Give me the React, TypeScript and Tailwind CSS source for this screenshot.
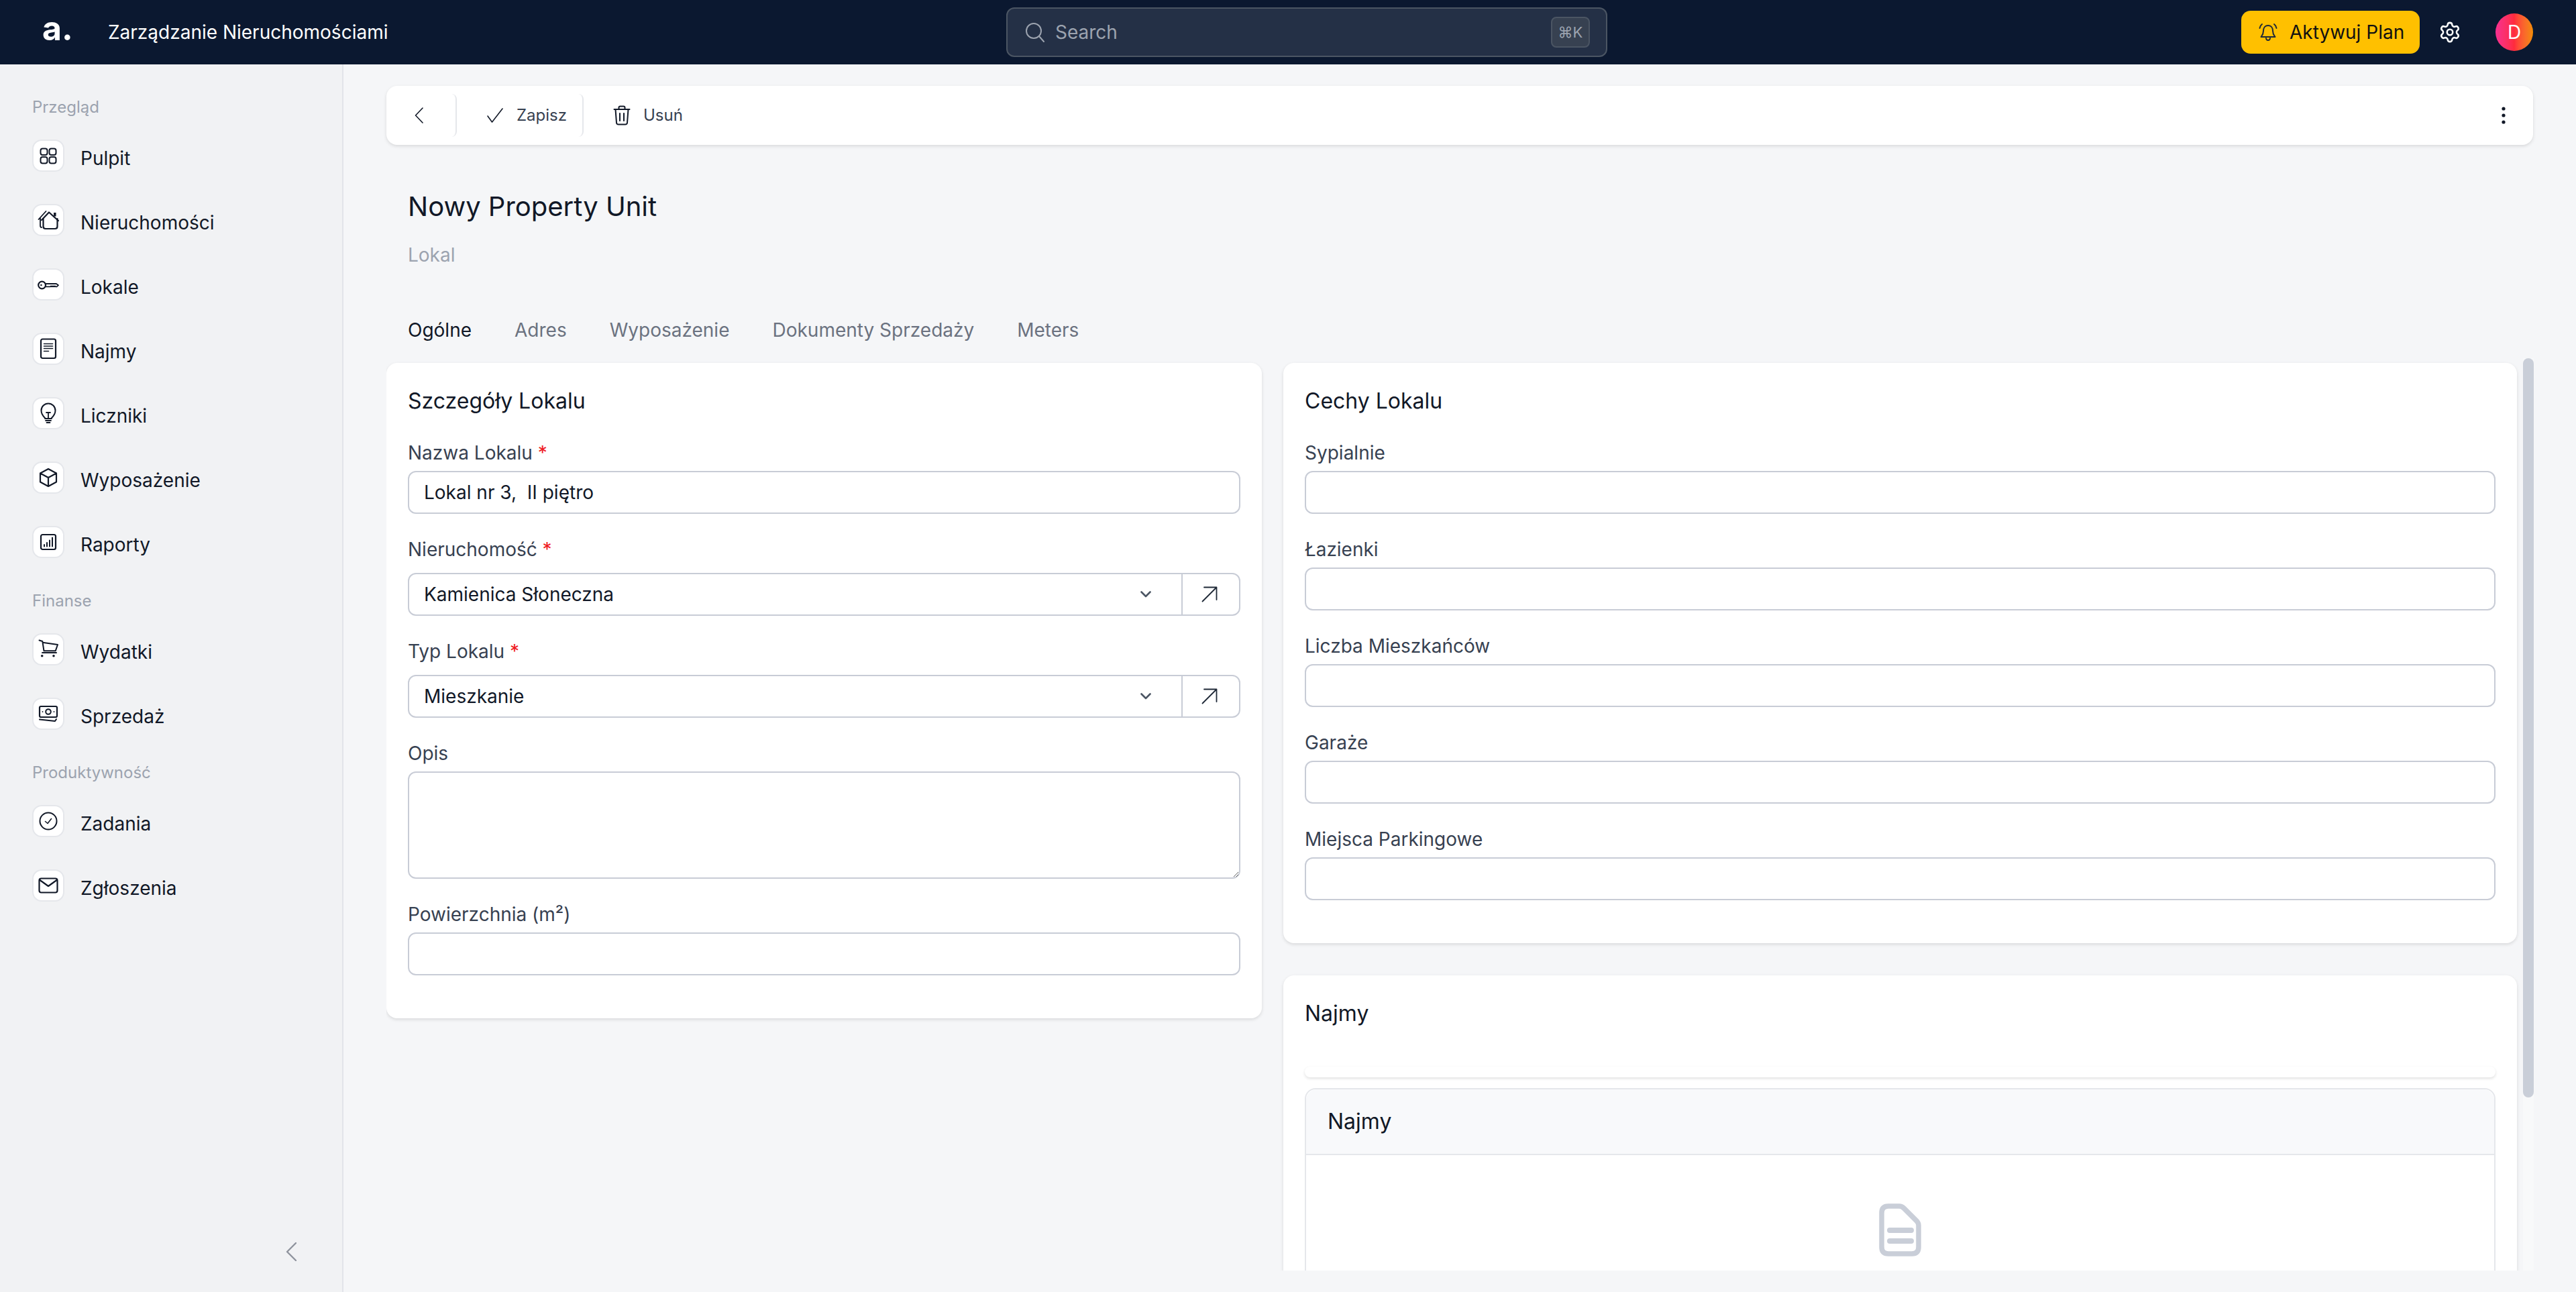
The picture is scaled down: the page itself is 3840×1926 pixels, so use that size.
import type { ReactNode } from "react";

function SvgIcon({ children }: { children: ReactNode }) {
  return (
    <svg width="32" height="32" viewBox="0 0 32 32" fill="none" stroke="#111827" strokeWidth="2" strokeLinecap="round" strokeLinejoin="round">
      {children}
    </svg>
  );
}

const navIcons: Record<string, ReactNode> = {
  Pulpit: (
    <>
      <rect x="4.5" y="5.5" width="10" height="9.5" rx="3" />
      <rect x="17.5" y="5.5" width="10" height="9.5" rx="3" />
      <rect x="4.5" y="18" width="10" height="9.5" rx="3" />
      <rect x="17.5" y="18" width="10" height="9.5" rx="3" />
    </>
  ),
  Nieruchomości: (
    <>
      <path d="M6 16 L17 4.5 L31 17" strokeWidth="2.2" />
      <path d="M8.5 14 V25.5 Q8.5 29 12 29 H26 Q29.5 29 29.5 25.5 V14" strokeWidth="2.2" />
      <path d="M12.5 3 L1.5 15 M4 13 V24 Q4 27 6 27" strokeWidth="1.8" />
      <path d="M25.8 5 V10.5" strokeWidth="3.5" strokeLinecap="butt" />
    </>
  ),
  Lokale: (
    <>
      <circle cx="6.6" cy="17" r="5.4" strokeWidth="2.2" />
      <circle cx="5.4" cy="17" r="1.3" fill="#111827" stroke="none" />
      <path d="M12 15 H28 L31 17.2 L28.6 19.4 H27 L26 18.4 L25 19.4 L24 18.4 L23 19.4 L22 18.4 L21 19.4 L20 18.4 L19 19.4 H12" strokeWidth="1.8" />
    </>
  ),
  Najmy: (
    <>
      <rect x="5" y="1.5" width="22" height="28.5" rx="2.5" strokeWidth="2.2" />
      <path d="M9.5 8.5 H22.5 M9.5 12 H22.5 M9.5 15.5 H22.5 M9.5 19.5 H16.5" strokeWidth="1.6" />
    </>
  ),
  Liczniki: (
    <>
      <path d="M11 23 C8 20 5.5 17 5.5 12 a10.5 10.5 0 0 1 21 0 C26.5 17 24 20 21 23" />
      <path d="M16 15 V24 M13 15 H19" strokeWidth="1.8" />
      <path d="M11 24 H21 M12 27 H20 M13.5 30 H18.5" strokeWidth="1.8" />
    </>
  ),
  Wyposażenie: <path d="M16 3 L28 9.5 V22.5 L16 29 L4 22.5 V9.5 Z M4 9.5 L16 16 L28 9.5 M16 16 V29" strokeWidth="2.2" />,
  Raporty: (
    <>
      <rect x="5" y="5" width="22" height="22" rx="2.5" strokeWidth="2.2" />
      <path d="M10 22.5 V20 M14 22.5 V17 M18 22.5 V13.5 M22 22.5 V9.5" strokeWidth="2" />
    </>
  ),
  Wydatki: (
    <>
      <path d="M2.5 2.5 L7.3 4 L9.5 18.3 H26.7 L30 9 L7.5 5.8" strokeWidth="2" />
      <path d="M7 21 H28" strokeWidth="2" />
      <circle cx="6.7" cy="25.7" r="1.8" fill="#111827" stroke="none" />
      <circle cx="24" cy="25.7" r="1.8" fill="#111827" stroke="none" />
    </>
  ),
  Sprzedaż: (
    <>
      <rect x="3" y="5" width="26" height="16" rx="2" strokeWidth="2.2" />
      <circle cx="16" cy="13" r="3.8" strokeWidth="2" />
      <circle cx="7.5" cy="13" r="0.9" fill="#111827" stroke="none" />
      <circle cx="24.5" cy="13" r="0.9" fill="#111827" stroke="none" />
      <path d="M3 24.5 L26 27 L28 24" strokeWidth="2" />
    </>
  ),
  Zadania: (
    <>
      <circle cx="16" cy="16" r="12.5" />
      <path d="M11.5 16.5 L15 19.5 L20.5 12.5" strokeWidth="1.6" />
    </>
  ),
  Zgłoszenia: (
    <>
      <rect x="2.5" y="5.5" width="27" height="21" rx="3" strokeWidth="2.2" />
      <path d="M3.5 8 L16 17 L28.5 8" strokeWidth="2.2" />
    </>
  ),
};

const navSections = [
  { label: "Przegląd", items: ["Pulpit", "Nieruchomości", "Lokale", "Najmy", "Liczniki", "Wyposażenie", "Raporty"] },
  { label: "Finanse", items: ["Wydatki", "Sprzedaż"] },
  { label: "Produktywność", items: ["Zadania", "Zgłoszenia"] },
];

function Header() {
  return (
    <header className="h-24 shrink-0 bg-[#0b1830] flex items-center">
      <div className="w-[1500px] flex items-center text-white">
        <span className="ml-[63px] w-[98px] text-[50px] leading-none font-bold pb-3">a.</span>
        <span className="text-[28px]">Zarządzanie Nieruchomościami</span>
      </div>
      <div className="w-[896px] h-[74px] flex items-center rounded-xl border-2 border-[#4b5563] bg-[#243046] pl-[26px] pr-[24px]">
        <svg width="30" height="30" viewBox="0 0 30 30" fill="none" stroke="#9ca3af" strokeWidth="2" strokeLinecap="round">
          <circle cx="13" cy="13" r="11" />
          <path d="M21 21 L28 29" />
        </svg>
        <span className="ml-[15px] text-[28px] text-[#9ca3af]">Search</span>
        <span className="ml-auto w-[58px] h-[46px] flex items-center justify-center rounded-lg border-2 border-[#4b5563] bg-[#374151] text-[22px] text-[#9ca3af]">⌘K</span>
      </div>
      <div className="flex-1 flex items-center justify-end pr-16">
        <button className="w-[266px] h-16 flex items-center rounded-[14px] bg-[#ffc000] pl-[26px] text-[28px] text-[#111]">
          <svg width="28" height="28" viewBox="0 0 28 28" fill="none" stroke="#1f2937" strokeWidth="2" strokeLinecap="round" strokeLinejoin="round">
            <path d="M14 4 C9 4 7 8 7 12 C7 17 5 19 3.5 21 H24.5 C23 19 21 17 21 12 C21 8 19 4 14 4 Z" />
            <path d="M11 23 C11.5 27 16.5 27 17 23" />
            <path d="M1.5 8 C2 5.5 3 3.5 5 2 M26.5 8 C26 5.5 25 3.5 23 2" />
          </svg>
          <span className="ml-[18px]">Aktywuj Plan</span>
        </button>
        <svg className="ml-[28px]" width="34" height="34" viewBox="0 0 24 24" fill="none" stroke="#fff" strokeWidth="1.8" strokeLinecap="round" strokeLinejoin="round">
          <path d="M9.671 4.136a2.34 2.34 0 0 1 4.659 0 2.34 2.34 0 0 0 3.319 1.915 2.34 2.34 0 0 1 2.33 4.033 2.34 2.34 0 0 0 0 3.831 2.34 2.34 0 0 1-2.33 4.033 2.34 2.34 0 0 0-3.319 1.915 2.34 2.34 0 0 1-4.659 0 2.34 2.34 0 0 0-3.32-1.915 2.34 2.34 0 0 1-2.33-4.033 2.34 2.34 0 0 0 0-3.831A2.34 2.34 0 0 1 6.35 6.051a2.34 2.34 0 0 0 3.319-1.915" />
          <circle cx="12" cy="12" r="3" />
        </svg>
        <div className="ml-[51px] w-14 h-14 rounded-full flex items-center justify-center bg-gradient-to-r from-[#f72f91] via-[#ff2b3c] to-[#f28c00] text-white text-[28px]">D</div>
      </div>
    </header>
  );
}

function Sidebar() {
  return (
    <aside className="w-[512px] shrink-0 flex flex-col border-r-2 border-[#e2e4e9] bg-[#f1f2f4] pl-12 pt-12">
      {navSections.map((section) => (
        <div key={section.label} className="mb-12">
          <div className="h-8 mb-8 text-[24px] leading-8 text-[#9ca3af]">{section.label}</div>
          <div className="flex flex-col gap-12">
            {section.items.map((item) => (
              <div key={item} className="h-12 flex items-center gap-6">
                <span className="w-12 h-12 flex items-center justify-center rounded-[14px] border-2 border-[#e5e7eb] bg-white">
                  <SvgIcon>{navIcons[item]}</SvgIcon>
                </span>
                <span className="pt-2 text-[28px] text-[#111827]">{item}</span>
              </div>
            ))}
          </div>
        </div>
      ))}
      <svg className="mt-auto self-end mr-[68px] mb-[46px]" width="16" height="28" viewBox="0 0 16 28" fill="none" stroke="#8f939d" strokeWidth="2.4" strokeLinecap="round" strokeLinejoin="round">
        <path d="M15 1 L2 14 L15 27" />
      </svg>
    </aside>
  );
}

function Toolbar() {
  return (
    <div className="h-[88px] w-[3200px] flex items-center rounded-2xl bg-white shadow-[0_2px_5px_rgba(0,0,0,0.12)] text-[24px] text-[#374151]">
      <div className="w-[105px] h-16 flex items-center pl-[42px] border-r-2 border-[#e5e7eb] rounded-r-lg">
        <svg width="13" height="24" viewBox="0 0 13 24" fill="none" stroke="#111827" strokeWidth="1.6" strokeLinecap="round" strokeLinejoin="round">
          <path d="M12 1 L1.5 12 L12 23" />
        </svg>
      </div>
      <div className="w-[189px] h-16 flex items-center pl-[44px] border-r-2 border-[#e5e7eb] rounded-r-lg">
        <svg width="26" height="24" viewBox="0 0 26 24" fill="none" stroke="#111827" strokeWidth="1.6" strokeLinecap="round" strokeLinejoin="round">
          <path d="M2 13 L8.5 22 L24 2" />
        </svg>
        <span className="ml-[19px]">Zapisz</span>
      </div>
      <div className="h-16 flex items-center pl-[44px]">
        <svg width="26" height="30" viewBox="0 0 26 30" fill="none" stroke="#111827" strokeWidth="2" strokeLinecap="round" strokeLinejoin="round">
          <path d="M1.5 6 H24.5 M8.5 6 V3.5 Q8.5 1.5 10.5 1.5 H15.5 Q17.5 1.5 17.5 3.5 V6" />
          <path d="M3.5 6 L5 26 Q5.2 28.5 8 28.5 H18 Q20.8 28.5 21 26 L22.5 6" />
          <path d="M10 12 V23 M16 12 V23" />
        </svg>
        <span className="ml-[19px]">Usuń</span>
      </div>
      <svg className="ml-auto mr-[41px]" width="6" height="26" viewBox="0 0 6 26" fill="#111827">
        <circle cx="3" cy="3" r="2.6" />
        <circle cx="3" cy="13" r="2.6" />
        <circle cx="3" cy="23" r="2.6" />
      </svg>
    </div>
  );
}

function Label({ text, required }: { text: string; required?: boolean }) {
  return (
    <label className="block h-10 mb-2 text-[28px] leading-[42px] text-[#374151]">
      {text}
      {required && <span className="text-[#ef1c24]"> *</span>}
    </label>
  );
}

function TextField({ label, required, value }: { label: string; required?: boolean; value?: string }) {
  return (
    <div className="mb-8">
      <Label text={label} required={required} />
      <input
        readOnly
        defaultValue={value}
        className="block w-full h-16 rounded-xl border-2 border-[#c8ccd6] bg-white px-[22px] text-[28px] text-[#111827] outline-none"
      />
    </div>
  );
}

function LinkSelect({ label, value }: { label: string; value: string }) {
  return (
    <div className="mb-8">
      <div className="mb-4">
        <Label text={label} required />
      </div>
      <div className="h-16 flex rounded-xl border-2 border-[#c8ccd6] bg-white text-[28px] text-[#111827]">
        <div className="flex-1 flex items-center pl-[22px] pr-[45px] border-r-2 border-[#c8ccd6]">
          <span>{value}</span>
          <svg className="ml-auto" width="16" height="10" viewBox="0 0 16 10" fill="none" stroke="#4b5563" strokeWidth="2.6" strokeLinecap="round" strokeLinejoin="round">
            <path d="M1.5 1.5 L8 8 L14.5 1.5" />
          </svg>
        </div>
        <div className="w-[84px] flex items-center justify-center pr-1">
          <svg width="24" height="24" viewBox="0 0 24 24" fill="none" stroke="#1f2937" strokeWidth="1.8" strokeLinecap="round" strokeLinejoin="round">
            <path d="M1.5 22.5 L22.5 1.5 M4 1.5 H22.5 V20" />
          </svg>
        </div>
      </div>
    </div>
  );
}

function Card({ title, children }: { title: string; children: ReactNode }) {
  return (
    <section className="rounded-2xl bg-white px-8 pt-[33px] pb-8 shadow-[0_2px_5px_rgba(0,0,0,0.12)]">
      <h2 className="h-12 mb-8 text-[32px] leading-[48px] font-normal text-[#111827]">{title}</h2>
      {children}
    </section>
  );
}

function LeftColumn() {
  return (
    <Card title="Szczegóły Lokalu">
      <TextField label="Nazwa Lokalu" required value="Lokal nr 3,  II piętro" />
      <LinkSelect label="Nieruchomość" value="Kamienica Słoneczna" />
      <LinkSelect label="Typ Lokalu" value="Mieszkanie" />
      <div className="mb-8">
        <Label text="Opis" />
        <textarea readOnly className="block w-full h-40 rounded-xl border-2 border-[#c8ccd6] bg-white outline-none" />
      </div>
      <TextField label="Powierzchnia (m²)" />
    </Card>
  );
}

function RightColumn() {
  return (
    <div className="flex flex-col gap-12">
      <Card title="Cechy Lokalu">
        <TextField label="Sypialnie" />
        <TextField label="Łazienki" />
        <TextField label="Liczba Mieszkańców" />
        <TextField label="Garaże" />
        <TextField label="Miejsca Parkingowe" />
      </Card>
      <section className="rounded-2xl bg-white px-8 pt-[33px] pb-8 shadow-[0_2px_5px_rgba(0,0,0,0.12)]">
        <h2 className="h-12 text-[32px] leading-[48px] font-normal text-[#111827]">Najmy</h2>
        <div className="h-4 mt-[55px] rounded-lg bg-white shadow-[0_2px_4px_rgba(0,0,0,0.12)]" />
        <div className="mt-4 rounded-t-2xl border-2 border-[#e5e7eb]">
          <div className="h-[98px] flex items-center px-8 rounded-t-2xl border-b-2 border-[#e5e7eb] bg-[#f8f9fb] text-[32px] text-[#111827]">Najmy</div>
          <div className="flex justify-center pt-[68px] pb-16">
            <svg width="80" height="88" viewBox="0 0 80 88" fill="none" stroke="#c9ced8" strokeWidth="7.5" strokeLinecap="round" strokeLinejoin="round">
              <path d="M22 8 H38 Q42 8 45 11 L64 30 Q67 33 67 37 V69 Q67 79 57 79 H22 Q12 79 12 69 V18 Q12 8 22 8 Z" />
              <path d="M24 44 H56 M24 60 H56" strokeWidth="8" />
            </svg>
          </div>
        </div>
      </section>
    </div>
  );
}

function Main() {
  return (
    <main className="flex-1 min-w-0 flex flex-col bg-[#f5f6f8] pl-16 pt-8">
      <Toolbar />
      <h1 className="ml-8 mt-[64px] h-14 text-[40px] leading-[56px] font-normal text-[#111827]">Nowy Property Unit</h1>
      <div className="ml-8 mt-[24px] h-10 text-[28px] leading-10 text-[#9ca3af]">Lokal</div>
      <div className="ml-8 mt-[72px] h-10 flex gap-[64px] text-[28px] leading-10 text-[#6b7280]">
        <span className="text-[#111827]">Ogólne</span>
        <span>Adres</span>
        <span>Wyposażenie</span>
        <span>Dokumenty Sprzedaży</span>
        <span>Meters</span>
      </div>
      <div className="relative mt-[22px] w-[3201px] h-[1360px] overflow-hidden pt-[7px]">
        <div className="grid grid-cols-[1305px_1839px] gap-8 items-start">
          <LeftColumn />
          <RightColumn />
        </div>
        <div className="absolute right-0 top-0 w-4 h-full bg-[#f8f9fa]">
          <div className="w-full h-[1102px] rounded-full bg-[#c9ced8]" />
        </div>
      </div>
    </main>
  );
}

export default function App() {
  return (
    <div className="w-[3840px] h-[1926px] flex flex-col overflow-hidden font-['Inter',sans-serif]">
      <Header />
      <div className="flex-1 min-h-0 flex">
        <Sidebar />
        <Main />
      </div>
    </div>
  );
}
